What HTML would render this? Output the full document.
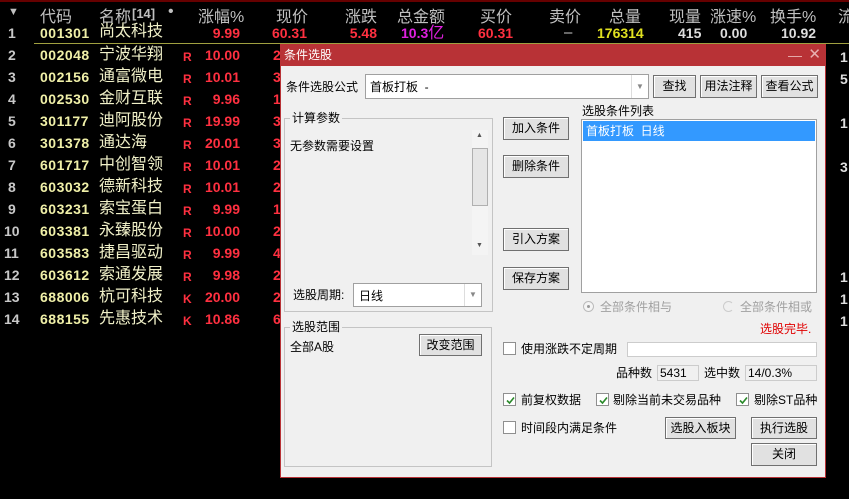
<!DOCTYPE html>
<html><head><meta charset="utf-8"><style>
*{margin:0;padding:0;box-sizing:border-box}
body{width:849px;height:499px;background:#000;position:relative;overflow:hidden;font-family:"Liberation Sans","Noto Sans CJK SC",sans-serif}
.a{position:absolute;white-space:nowrap}
.h{color:#c0c0c0;font-size:16px;top:3px}
.t{font-size:15px;line-height:22px;height:22px}
.n{color:#c8c8c8;font-weight:bold;font-size:14px}
.c{color:#f0f0a8;font-weight:bold;font-size:14px;letter-spacing:0.5px}
.nm{color:#f0f0c8;font-size:16px}
.r{color:#ff3040;font-weight:bold;font-size:14px}
.rr{color:#ff3040;font-weight:bold;font-size:12px}
.d{font-size:12px;color:#000;line-height:14px}
.btn{position:absolute;background:#e1e1e1;border:1px solid #707070;box-shadow:inset 1px 1px #fff;font-size:12px;text-align:center;color:#000}
.box{position:absolute;background:#fff;border:1px solid #a0a0a0}
.grp{position:absolute;border:1px solid #c4c4c4}
.chk{position:absolute;width:13px;height:13px;border:1px solid #8f8f8f;background:#fff}
.chk svg{position:absolute;left:1px;top:1px}
.ddb{position:absolute;right:0;top:0;bottom:0;width:17px;border-left:1px solid #ddd;color:#888;font-size:8px;text-align:center}
</style></head><body>
<div class="a" style="left:0;top:0;width:849px;height:2px;background:#600"></div>
<div class="a h" style="left:8px;font-size:11px;top:6px">▼</div>
<div class="a h" style="left:40px">代码</div>
<div class="a h" style="left:99px">名称</div>
<div class="a h" style="left:132px;font-size:13px;top:6px;font-weight:bold">[14]</div>
<div class="a h" style="left:168px">•</div>
<div class="a h" style="left:198px">涨幅%</div>
<div class="a h" style="left:276px">现价</div>
<div class="a h" style="left:345px">涨跌</div>
<div class="a h" style="left:397px">总金额</div>
<div class="a h" style="left:480px">买价</div>
<div class="a h" style="left:549px">卖价</div>
<div class="a h" style="left:609px">总量</div>
<div class="a h" style="left:669px">现量</div>
<div class="a h" style="left:710px">涨速%</div>
<div class="a h" style="left:770px">换手%</div>
<div class="a h" style="left:838px">流</div>
<div class="a" style="left:34px;top:43px;width:815px;height:1px;background:#a0a040"></div>

<div class="a t" style="top:22px;left:0;width:849px">
<span class="a n" style="left:8px">1</span><span class="a c" style="left:40px">001301</span><span class="a nm" style="left:99px;top:-1px">尚太科技</span>
<span class="a r" style="right:609px">9.99</span><span class="a r" style="right:542px">60.31</span><span class="a r" style="right:472px">5.48</span>
<span class="a" style="left:401px;color:#e020e0;font-weight:bold;font-size:14px">10.3<span style="font-weight:normal;font-size:16px">亿</span></span>
<span class="a r" style="left:478px">60.31</span><span class="a" style="left:564px;color:#ccc">–</span>
<span class="a" style="left:597px;color:#e0e020;font-weight:bold;font-size:14px">176314</span>
<span class="a" style="left:678px;color:#ddd;font-weight:bold;font-size:14px">415</span>
<span class="a" style="left:720px;color:#ddd;font-weight:bold;font-size:14px">0.00</span>
<span class="a" style="left:781px;color:#ddd;font-weight:bold;font-size:14px">10.92</span>
</div>

<div class="a t" style="top:44px;left:0;width:290px"><span class="a n" style="left:8px">2</span><span class="a c" style="left:40px">002048</span><span class="a nm" style="left:99px">宁波华翔</span><span class="a rr" style="left:183px;top:2px">R</span><span class="a r" style="right:50px">10.00</span><span class="a r" style="left:273px">2</span></div>
<div class="a t" style="top:66px;left:0;width:290px"><span class="a n" style="left:8px">3</span><span class="a c" style="left:40px">002156</span><span class="a nm" style="left:99px">通富微电</span><span class="a rr" style="left:183px;top:2px">R</span><span class="a r" style="right:50px">10.01</span><span class="a r" style="left:273px">3</span></div>
<div class="a t" style="top:88px;left:0;width:290px"><span class="a n" style="left:8px">4</span><span class="a c" style="left:40px">002530</span><span class="a nm" style="left:99px">金财互联</span><span class="a rr" style="left:183px;top:2px">R</span><span class="a r" style="right:50px">9.96</span><span class="a r" style="left:273px">1</span></div>
<div class="a t" style="top:110px;left:0;width:290px"><span class="a n" style="left:8px">5</span><span class="a c" style="left:40px">301177</span><span class="a nm" style="left:99px">迪阿股份</span><span class="a rr" style="left:183px;top:2px">R</span><span class="a r" style="right:50px">19.99</span><span class="a r" style="left:273px">3</span></div>
<div class="a t" style="top:132px;left:0;width:290px"><span class="a n" style="left:8px">6</span><span class="a c" style="left:40px">301378</span><span class="a nm" style="left:99px">通达海</span><span class="a rr" style="left:183px;top:2px">R</span><span class="a r" style="right:50px">20.01</span><span class="a r" style="left:273px">3</span></div>
<div class="a t" style="top:154px;left:0;width:290px"><span class="a n" style="left:8px">7</span><span class="a c" style="left:40px">601717</span><span class="a nm" style="left:99px">中创智领</span><span class="a rr" style="left:183px;top:2px">R</span><span class="a r" style="right:50px">10.01</span><span class="a r" style="left:273px">2</span></div>
<div class="a t" style="top:176px;left:0;width:290px"><span class="a n" style="left:8px">8</span><span class="a c" style="left:40px">603032</span><span class="a nm" style="left:99px">德新科技</span><span class="a rr" style="left:183px;top:2px">R</span><span class="a r" style="right:50px">10.01</span><span class="a r" style="left:273px">2</span></div>
<div class="a t" style="top:198px;left:0;width:290px"><span class="a n" style="left:8px">9</span><span class="a c" style="left:40px">603231</span><span class="a nm" style="left:99px">索宝蛋白</span><span class="a rr" style="left:183px;top:2px">R</span><span class="a r" style="right:50px">9.99</span><span class="a r" style="left:273px">1</span></div>
<div class="a t" style="top:220px;left:0;width:290px"><span class="a n" style="left:4px">10</span><span class="a c" style="left:40px">603381</span><span class="a nm" style="left:99px">永臻股份</span><span class="a rr" style="left:183px;top:2px">R</span><span class="a r" style="right:50px">10.00</span><span class="a r" style="left:273px">2</span></div>
<div class="a t" style="top:242px;left:0;width:290px"><span class="a n" style="left:4px">11</span><span class="a c" style="left:40px">603583</span><span class="a nm" style="left:99px">捷昌驱动</span><span class="a rr" style="left:183px;top:2px">R</span><span class="a r" style="right:50px">9.99</span><span class="a r" style="left:273px">4</span></div>
<div class="a t" style="top:264px;left:0;width:290px"><span class="a n" style="left:4px">12</span><span class="a c" style="left:40px">603612</span><span class="a nm" style="left:99px">索通发展</span><span class="a rr" style="left:183px;top:2px">R</span><span class="a r" style="right:50px">9.98</span><span class="a r" style="left:273px">2</span></div>
<div class="a t" style="top:286px;left:0;width:290px"><span class="a n" style="left:4px">13</span><span class="a c" style="left:40px">688006</span><span class="a nm" style="left:99px">杭可科技</span><span class="a rr" style="left:183px;top:2px">K</span><span class="a r" style="right:50px">20.00</span><span class="a r" style="left:273px">2</span></div>
<div class="a t" style="top:308px;left:0;width:290px"><span class="a n" style="left:4px">14</span><span class="a c" style="left:40px">688155</span><span class="a nm" style="left:99px">先惠技术</span><span class="a rr" style="left:183px;top:2px">K</span><span class="a r" style="right:50px">10.86</span><span class="a r" style="left:273px">6</span></div>

<div class="a" style="left:840px;top:46px;color:#ddd;font-size:14px;line-height:22px;font-weight:bold">1<br>5<br><br>1<br><br>3<br><br><br><br><br>1<br>1<br>1</div>

<!-- dialog -->
<div class="a" style="left:280px;top:44px;width:546px;height:434px;background:#f0f0f0;border:1px solid #b83236;border-top:none">
 <div class="a" style="left:-1px;top:0;width:546px;height:22px;background:#b83236;color:#fff;font-size:12px;line-height:22px;padding-left:4px">条件选股
  <span class="a" style="right:24px;top:0;color:#e8b0b0;font-size:14px">—</span><span class="a" style="right:5px;top:0;color:#e8b0b0;font-size:15px">✕</span></div>
</div>
<div class="a d" style="left:286px;top:80px">条件选股公式</div>
<div class="box" style="left:365px;top:74px;width:284px;height:25px"><span class="a d" style="left:4px;top:5px">首板打板 &nbsp;-</span><div class="ddb" style="line-height:23px">▼</div></div>
<div class="btn" style="left:653px;top:75px;width:43px;height:23px;line-height:21px">查找</div>
<div class="btn" style="left:700px;top:75px;width:57px;height:23px;line-height:21px">用法注释</div>
<div class="btn" style="left:761px;top:75px;width:57px;height:23px;line-height:21px">查看公式</div>

<div class="grp" style="left:284px;top:118px;width:209px;height:194px"></div>
<div class="a d" style="left:290px;top:111px;background:#f0f0f0;padding:0 2px">计算参数</div>
<div class="a d" style="left:290px;top:139px">无参数需要设置</div>
<div class="a" style="left:472px;top:130px;width:16px;height:125px;background:#f4f4f4">
 <span class="a" style="left:4px;top:2px;font-size:7px;color:#555">▲</span>
 <div class="a" style="left:0;top:18px;width:16px;height:58px;background:#e6e6e6;border:1px solid #b0b0b0"></div>
 <span class="a" style="left:4px;top:112px;font-size:7px;color:#555">▼</span></div>
<div class="a d" style="left:293px;top:288px">选股周期:</div>
<div class="box" style="left:353px;top:283px;width:129px;height:24px"><span class="a d" style="left:5px;top:5px">日线</span><div class="ddb" style="line-height:22px">▼</div></div>

<div class="btn" style="left:503px;top:117px;width:66px;height:23px;line-height:21px">加入条件</div>
<div class="btn" style="left:503px;top:155px;width:66px;height:23px;line-height:21px">删除条件</div>
<div class="btn" style="left:503px;top:228px;width:66px;height:23px;line-height:21px">引入方案</div>
<div class="btn" style="left:503px;top:267px;width:66px;height:23px;line-height:21px">保存方案</div>

<div class="a d" style="left:582px;top:104px">选股条件列表</div>
<div class="box" style="left:581px;top:119px;width:236px;height:174px"><div class="a" style="left:1px;top:1px;width:232px;height:20px;background:#3399ff;color:#fff;font-size:12px;line-height:20px;padding-left:3px">首板打板 &nbsp;日线</div></div>
<div class="a" style="left:583px;top:301px;width:11px;height:11px;border-radius:50%;border:1px solid #bbb;background:#f4f4f4"><div class="a" style="left:3px;top:3px;width:3px;height:3px;border-radius:50%;background:#999"></div></div>
<div class="a d" style="left:600px;top:300px;color:#a0a0a0">全部条件相与</div>
<div class="a" style="left:723px;top:301px;width:11px;height:11px;border-radius:50%;border:1px solid #ccc;border-right-color:#f0f0f0"></div>
<div class="a d" style="left:740px;top:300px;color:#a0a0a0">全部条件相或</div>
<div class="a d" style="left:760px;top:322px;color:#e00000">选股完毕.</div>

<div class="grp" style="left:284px;top:327px;width:208px;height:140px"></div>
<div class="a d" style="left:290px;top:320px;background:#f0f0f0;padding:0 2px">选股范围</div>
<div class="a d" style="left:290px;top:340px">全部A股</div>
<div class="btn" style="left:419px;top:334px;width:63px;height:22px;line-height:20px">改变范围</div>

<div class="chk" style="left:503px;top:342px"></div><div class="a d" style="left:521px;top:342px">使用涨跌不定周期</div>
<div class="box" style="left:627px;top:342px;width:190px;height:15px;border-color:#ccc"></div>
<div class="a d" style="left:616px;top:366px">品种数</div>
<div class="a d" style="left:657px;top:365px;width:42px;height:16px;background:#f0f0f0;border:1px solid #ccc;padding:0 2px">5431</div>
<div class="a d" style="left:704px;top:366px">选中数</div>
<div class="a d" style="left:745px;top:365px;width:72px;height:16px;background:#f0f0f0;border:1px solid #ccc;padding:0 2px">14/0.3%</div>

<div class="chk" style="left:503px;top:393px"><svg width="11" height="11"><path d="M2 5.5 L4.5 8 L9 2.5" stroke="#2a8a2a" stroke-width="1.6" fill="none"/></svg></div><div class="a d" style="left:521px;top:393px">前复权数据</div>
<div class="chk" style="left:596px;top:393px"><svg width="11" height="11"><path d="M2 5.5 L4.5 8 L9 2.5" stroke="#2a8a2a" stroke-width="1.6" fill="none"/></svg></div><div class="a d" style="left:613px;top:393px">剔除当前未交易品种</div>
<div class="chk" style="left:736px;top:393px"><svg width="11" height="11"><path d="M2 5.5 L4.5 8 L9 2.5" stroke="#2a8a2a" stroke-width="1.6" fill="none"/></svg></div><div class="a d" style="left:754px;top:393px">剔除ST品种</div>

<div class="chk" style="left:503px;top:421px"></div><div class="a d" style="left:521px;top:421px">时间段内满足条件</div>
<div class="btn" style="left:665px;top:417px;width:71px;height:22px;line-height:20px">选股入板块</div>
<div class="btn" style="left:751px;top:417px;width:66px;height:22px;line-height:20px">执行选股</div>
<div class="btn" style="left:751px;top:443px;width:66px;height:23px;line-height:21px">关闭</div>
</body></html>
